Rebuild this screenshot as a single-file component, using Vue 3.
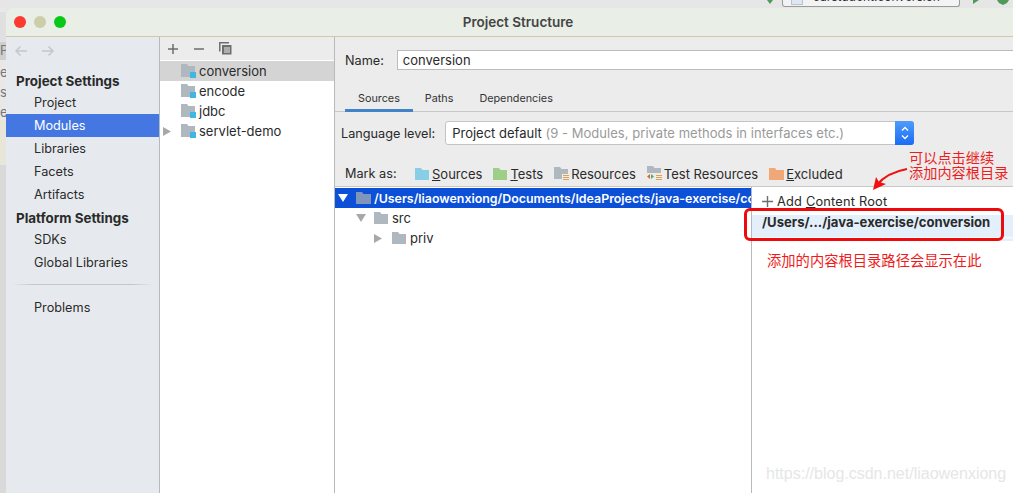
<script setup>
const settings = ['Project', 'Modules', 'Libraries', 'Facets', 'Artifacts']
const platform = ['SDKs', 'Global Libraries']
const modules = [
  { name: 'conversion', selected: true },
  { name: 'encode' },
  { name: 'jdbc' },
  { name: 'servlet-demo', arrow: true }
]
const tabs = ['Sources', 'Paths', 'Dependencies']
</script>

<template>
  <div class="page">
    <div class="desk-top">
      <svg class="top-mark" width="6" height="4" viewBox="0 0 6 4"><path d="M0 0h6L3 4z" fill="#4f9a5a"/></svg>
      <div class="desk-tab"><span class="tab-doc"></span><span class="tab-name">carstudent.conversion</span></div>
      <svg class="top-run" width="6" height="4" viewBox="0 0 6 4"><path d="M0 0l6 0-6 4z" fill="#4f9a5a"/></svg>
      <svg class="top-bug" width="12" height="5" viewBox="0 0 12 5"><path d="M0 0h12L10 3 6 5 2 3z" fill="#4f9a5a"/></svg>
    </div>
    <div class="desk-row">
      <div class="desk-left">
        <div class="band b1"></div>
        <div class="band b2"></div>
        <div class="band b3"></div>
        <div class="band b4"></div>
        <div class="band b5"></div>
        <span class="frag f1">P</span>
        <span class="frag f2">e</span>
        <span class="frag f3">s/</span>
        <span class="frag f4">e</span>
      </div>
      <div class="window">
        <div class="titlebar">
          <div class="lights">
            <i class="light red"></i>
            <i class="light gray"></i>
            <i class="light green"></i>
          </div>
          <div class="title">Project Structure</div>
        </div>
        <div class="body">
          <aside class="sidebar">
            <div class="nav-arrows">
              <svg width="14" height="12" viewBox="0 0 14 12"><path d="M13 6H2M6.500 1.500 2 6l4.500 4.500" fill="none" stroke="#c4c8cc" stroke-width="1.500"/></svg>
              <svg width="14" height="12" viewBox="0 0 14 12"><path d="M1 6h11M7.500 1.500 12 6l-4.500 4.500" fill="none" stroke="#c4c8cc" stroke-width="1.500"/></svg>
            </div>
            <div class="group first">Project Settings</div>
            <div v-for="s in settings" :key="s" class="item" :class="{ active: s === 'Modules' }">{{ s }}</div>
            <div class="group second">Platform Settings</div>
            <div v-for="s in platform" :key="s" class="item">{{ s }}</div>
            <div class="divider"></div>
            <div class="item">Problems</div>
          </aside>

          <section class="modules">
            <div class="mod-tools">
              <svg width="12" height="12" viewBox="0 0 12 12"><path d="M6 1v10M1 6h10" stroke="#6e6e6e" stroke-width="1.500"/></svg>
              <svg width="12" height="12" viewBox="0 0 12 12"><path d="M1 6h10" stroke="#6e6e6e" stroke-width="1.500"/></svg>
              <svg width="13" height="13" viewBox="0 0 13 13"><path d="M.8 9.500V.8H10" fill="none" stroke="#6e6e6e" stroke-width="1.500"/><path d="M3 3h9.500v9.500H3z" fill="#6e6e6e"/><path d="M5 6h6M5 8h6M5 10h6" stroke="#ececec"/></svg>
            </div>
            <div class="mod-list">
              <div v-for="m in modules" :key="m.name" class="mod-row" :class="{ selected: m.selected }">
                <svg v-if="m.arrow" class="mod-arrow" width="8" height="9" viewBox="0 0 8 9"><path d="M0 0l8 4.500L0 9z" fill="#a8a8a8"/></svg>
                <svg class="mod-folder" width="15" height="14" viewBox="0 0 15 14">
                  <path d="M0 0h6l1.500 2H14v11H0z" fill="#afb8bf"/>
                  <path d="M9 8h6v6H9z" fill="#40b6e0"/>
                </svg>
                <span>{{ m.name }}</span>
              </div>
            </div>
          </section>

          <section class="main">
            <div class="name-row">
              <label>Name:</label>
              <div class="name-input">conversion</div>
            </div>
            <div class="tabs">
              <div v-for="t in tabs" :key="t" class="tab" :class="{ on: t === 'Sources' }">{{ t }}</div>
            </div>
            <div class="lang-row">
              <label>Language level:</label>
              <div class="select">
                <div class="select-text">Project default <em>(9 - Modules, private methods in interfaces etc.)</em></div>
                <div class="stepper">
                  <svg width="10" height="16" viewBox="0 0 10 16"><path d="M2 5.500 5 2.500l3 3M2 10.500l3 3 3-3" fill="none" stroke="#fff" stroke-width="1.300"/></svg>
                </div>
              </div>
            </div>
            <div class="mark-row">
              <label>Mark as:</label>
              <span class="mark m-src">
                <svg width="15" height="12" viewBox="0 0 15 12"><path d="M0 0h6l1.500 2H14v10H0z" fill="#87cee6"/></svg>
                <span><u>S</u>ources</span>
              </span>
              <span class="mark">
                <svg width="15" height="12" viewBox="0 0 15 12"><path d="M0 0h6l1.500 2H14v10H0z" fill="#9dcf88"/></svg>
                <span><u>T</u>ests</span>
              </span>
              <span class="mark">
                <svg width="15" height="14" viewBox="0 0 15 14"><path d="M0 0h6l1.500 2H14v10H0z" fill="#afb8bf"/><path d="M8 7h7v7H8z" fill="#ececec"/><path d="M9 8.500h6M9 10.500h6M9 12.500h6" stroke="#e0a050"/></svg>
                <span>Resources</span>
              </span>
              <span class="mark">
                <svg width="15" height="16" viewBox="0 0 15 16"><path d="M0 0h6l1.500 2H14v10H0z" fill="#afb8bf"/><path d="M0 7h15v9H0z" fill="#ececec"/><path d="M3 8v5l-3-2.500z" fill="#d9692c"/><path d="M4 8v5l3-2.500z" fill="#59a869"/><path d="M9 9.500h6M9 11.500h6M9 13.500h6" stroke="#e0a050"/></svg>
                <span>Test Resources</span>
              </span>
              <span class="mark">
                <svg width="15" height="12" viewBox="0 0 15 12"><path d="M0 0h6l1.500 2H15v10H0z" fill="#f0a878"/></svg>
                <span><u>E</u>xcluded</span>
              </span>
            </div>
            <div class="split">
              <div class="tree">
                <div class="tree-row root">
                  <svg width="10" height="8" viewBox="0 0 10 8"><path d="M0 0h10L5 8z" fill="#fff"/></svg>
                  <svg width="15" height="12" viewBox="0 0 15 12"><path d="M0 0h6l1.500 2H15v10H0z" fill="#7f95bb"/></svg>
                  <span class="root-path">/Users/liaowenxiong/Documents/IdeaProjects/java-exercise/conversion</span>
                </div>
                <div class="tree-row lvl1">
                  <svg width="10" height="8" viewBox="0 0 10 8"><path d="M0 0h10L5 8z" fill="#a8a8a8"/></svg>
                  <svg width="14" height="12" viewBox="0 0 14 12"><path d="M0 0h6l1.500 2H14v10H0z" fill="#afb8bf"/></svg>
                  <span>src</span>
                </div>
                <div class="tree-row lvl2">
                  <svg width="8" height="9" viewBox="0 0 8 9"><path d="M0 0l8 4.500L0 9z" fill="#a8a8a8"/></svg>
                  <svg width="14" height="12" viewBox="0 0 14 12"><path d="M0 0h6l1.500 2H14v10H0z" fill="#afb8bf"/></svg>
                  <span>priv</span>
                </div>
              </div>
              <div class="roots">
                <div class="add-root">
                  <svg width="11" height="11" viewBox="0 0 11 11"><path d="M5.500 0v11M0 5.500h11" stroke="#6e6e6e" stroke-width="1.400"/></svg>
                  <span>Add <u>C</u>ontent Root</span>
                </div>
                <div class="root-item">/Users/.../java-exercise/conversion</div>
                <div class="root-box"></div>
                <div class="note-bottom">添加的内容根目录路径会显示在此</div>
              </div>
            </div>
            <div class="note-top">可以点击继续<br>添加内容根目录</div>
            <svg class="note-arrow" width="36" height="24" viewBox="0 0 36 24">
              <path d="M35 2C24 4 12 9 5 18" fill="none" stroke="#f01010" stroke-width="2.200"/>
              <path d="M1 23 4 10l3 5 7 2z" fill="#f01010"/>
            </svg>
          </section>
        </div>
      </div>
    </div>
    <div class="watermark">https://blog.csdn.net/liaowenxiong</div>
  </div>
</template>

<style scoped>
.page {
  position: relative;
  width: 1013px;
  height: 493px;
  overflow: hidden;
  display: flex;
  flex-direction: column;
  background: #e6e6e6;
  font-family: Inter, "Noto Sans", sans-serif;
  font-size: 12.7px;
  color: #2a2a2a;
}
label {
  font-size: 12.7px;
}

/* bits of the desktop behind the dialog */
.desk-top {
  height: 8px;
  flex: none;
  display: flex;
  justify-content: flex-end;
  background: #e6e6e6;
}
.top-mark {
  margin-right: 9px;
}
.desk-tab {
  width: 178px;
  height: 7px;
  box-sizing: border-box;
  padding-left: 8px;
  display: flex;
  overflow: hidden;
  background: #f3f3f3;
  border: 1px solid #9a9a9a;
  border-top: 0;
  border-radius: 0 0 3px 3px;
}
.tab-doc {
  width: 10px;
  height: 4px;
  flex: none;
  background: #dfe8f2;
  border: 1px solid #b8c4d0;
  border-top: 0;
}
.tab-name {
  margin: -11px 0 0 10px;
  font-size: 12px;
  line-height: 15px;
  white-space: nowrap;
  color: #333;
}
.top-run {
  margin-left: 13px;
}
.top-bug {
  margin: 0 4px 0 18px;
}
.desk-row {
  flex: 1;
  display: flex;
  min-height: 0;
}
.desk-left {
  position: relative;
  width: 6px;
  flex: none;
  overflow: hidden;
  display: flex;
  flex-direction: column;
  background: #d9d9d9;
}
.band { flex: none; }
.b1 { height: 4px; background: #e8e8e8; }
.b2 { height: 30px; background: #e0e0e0; }
.b3 { height: 18px; background: #cfcfcf; }
.b4 { height: 60px; background: #e8e8e8; }
.b5 { height: 45px; background: #e8e6d8; }
.frag {
  position: absolute;
  left: 0;
  font-size: 13px;
  color: #777;
}
.f1 { top: 34px; }
.f2 { top: 56px; }
.f3 { top: 76px; }
.f4 { top: 96px; }

.window {
  flex: 1;
  min-width: 0;
  display: flex;
  flex-direction: column;
  border-radius: 8px 0 0 0;
  overflow: hidden;
}
.titlebar {
  position: relative;
  height: 29px;
  flex: none;
  box-sizing: border-box;
  background: #e9eee7;
  border-bottom: 1px solid #cfc9a9;
  display: flex;
  align-items: center;
  justify-content: center;
}
.lights {
  position: absolute;
  left: 8px;
  top: 8px;
  display: flex;
  gap: 8px;
}
.light {
  width: 12px;
  height: 12px;
  border-radius: 50%;
}
.red { background: #fb3a30; }
.gray { background: #cdcdaa; }
.green { background: #0ac81a; }
.title {
  font-size: 13.5px;
  font-weight: 600;
  color: #444;
  margin: 0 0 1px 17px;
}
.body {
  flex: 1;
  display: flex;
  min-height: 0;
}

.sidebar {
  width: 154px;
  flex: none;
  box-sizing: border-box;
  background: #e6eaee;
  border-right: 1px solid #b6babd;
}
.nav-arrows {
  height: 27px;
  padding-left: 8px;
  display: flex;
  align-items: center;
  gap: 13px;
}
.group {
  line-height: 23px;
  padding-left: 10px;
  font-weight: 700;
  font-size: 13.4px;
}
.group.first {
  margin-top: 6px;
  height: 21px;
}
.group.second {
  margin-top: 1px;
  height: 21px;
}
.item {
  height: 23px;
  line-height: 23px;
  padding-left: 28px;
}
.item.active {
  background: #4477e2;
  color: #fff;
}
.divider {
  height: 1px;
  margin: 10px 6px 11px;
  background: linear-gradient(90deg, #e6eaee, #c4c6c8 15%, #c4c6c8 85%, #e6eaee);
}

.modules {
  width: 175px;
  flex: none;
  box-sizing: border-box;
  background: #fff;
  border-right: 1px solid #b6babd;
  display: flex;
  flex-direction: column;
}
.mod-tools {
  height: 24px;
  box-sizing: border-box;
  padding-left: 7px;
  background: #ececec;
  border-bottom: 1px solid #fff;
  display: flex;
  align-items: center;
  gap: 14px;
}
.mod-list {
  flex: 1;
}
.mod-row {
  position: relative;
  height: 20px;
  display: flex;
  align-items: center;
  padding-left: 21px;
  font-size: 13px;
}
.mod-row.selected {
  background: #d4d4d4;
}
.mod-arrow {
  position: absolute;
  left: 3px;
  top: 6px;
}
.mod-folder {
  margin-right: 3px;
}

.main {
  position: relative;
  flex: 1;
  min-width: 0;
  background: #ececec;
  display: flex;
  flex-direction: column;
}
.name-row {
  height: 20px;
  margin-top: 13px;
  padding-left: 10px;
  display: flex;
  align-items: center;
  gap: 13px;
}
.name-input {
  flex: 1;
  height: 20px;
  line-height: 19px;
  box-sizing: border-box;
  padding-left: 5px;
  background: #fff;
  border: 1px solid #bcbcbc;
  border-right: 0;
  font-size: 13px;
}
.tabs {
  height: 29px;
  margin-top: 13px;
  box-sizing: border-box;
  padding-left: 10px;
  border-bottom: 1px solid #c8c8c8;
  display: flex;
}
.tab {
  position: relative;
  padding: 0 13px;
  font-size: 10.8px;
  line-height: 31px;
  color: #333;
}
.tab + .tab {
  padding: 0 13px 0 12px;
}
.tab:last-child {
  margin-left: 1px;
}
.tab.on::after {
  content: "";
  position: absolute;
  left: 0;
  right: 0;
  bottom: -1px;
  height: 3px;
  background: #4083c9;
}
.lang-row {
  height: 24px;
  margin-top: 9px;
  padding-left: 6px;
  display: flex;
  align-items: center;
  gap: 10px;
}
.select {
  width: 469px;
  height: 24px;
  box-sizing: border-box;
  display: flex;
  background: #fff;
  border: 1px solid #c4c4c4;
  border-radius: 3px;
}
.select-text {
  flex: 1;
  line-height: 22px;
  padding-left: 6px;
  font-size: 13px;
  white-space: nowrap;
  overflow: hidden;
}
.select-text em {
  font-style: normal;
  color: #9a9a9a;
  letter-spacing: 0.04px;
}
.stepper {
  width: 19px;
  margin: -1px -1px -1px 0;
  border-radius: 0 3px 3px 0;
  background: linear-gradient(#4f9bfb, #1a6cf5);
  display: flex;
  align-items: center;
  justify-content: center;
}
.mark-row {
  height: 23px;
  margin: 17px 0 1px;
  padding-left: 10px;
  display: flex;
  align-items: center;
  gap: 11px;
  font-size: 13px;
}
.mark-row label {
  width: 52px;
  flex: none;
  margin-right: 7px;
}
.mark {
  display: inline-flex;
  align-items: center;
  gap: 2px;
}
.split {
  flex: 1;
  min-height: 0;
  display: flex;
  background: #fff;
  border-top: 1px solid #c8c8c8;
}
.tree {
  width: 416px;
  flex: none;
  overflow: hidden;
  box-sizing: border-box;
  padding-top: 1px;
}
.tree-row {
  height: 20px;
  display: flex;
  align-items: center;
  white-space: nowrap;
  font-size: 13px;
  gap: 4px;
}
.tree-row svg {
  flex: none;
}
.root {
  background: #0c50d8;
  color: #fff;
  padding-left: 3px;
  gap: 8px;
}
.root-path {
  font-weight: 600;
  margin-left: -5px;
  font-size: 12.4px;
}
.lvl1 { padding-left: 21px; }
.lvl1 svg:first-child { margin-right: 4px; }
.lvl2 { padding-left: 39px; }
.lvl2 svg:first-child { margin-right: 6px; }
.roots {
  position: relative;
  flex: 1;
  min-width: 0;
  border-left: 1px solid #b6babd;
}
.add-root {
  height: 28px;
  padding-left: 10px;
  display: flex;
  align-items: center;
  gap: 4px;
  background: #fff;
  font-size: 12.8px;
  letter-spacing: 0.2px;
}
.root-item {
  height: 26px;
  line-height: 15px;
  padding-left: 10px;
  background: linear-gradient(#e3f0fb 85%, #fff 85%, #e3f0fb 92%);
  font-weight: 700;
  font-size: 13.1px;
  white-space: nowrap;
}
.root-box {
  position: absolute;
  left: -8px;
  top: 21px;
  width: 260px;
  height: 33px;
  box-sizing: border-box;
  border: 3px solid #ee0a0a;
  border-radius: 6px;
}
.note-bottom {
  margin: 8px 0 0 15px;
  color: #ee1c1c;
  font-size: 14.3px;
  font-family: "Noto Sans CJK SC", sans-serif;
  white-space: nowrap;
}
.note-top {
  position: absolute;
  left: 574px;
  top: 113px;
  color: #ee1c1c;
  font-size: 14.2px;
  line-height: 15px;
  font-family: "Noto Sans CJK SC", sans-serif;
  white-space: nowrap;
}
.note-arrow {
  position: absolute;
  left: 537px;
  top: 130px;
}
.watermark {
  position: absolute;
  left: 766px;
  top: 465px;
  font-family: "Liberation Sans", sans-serif;
  font-size: 16px;
  color: #e6e6e6;
  white-space: nowrap;
}
</style>
